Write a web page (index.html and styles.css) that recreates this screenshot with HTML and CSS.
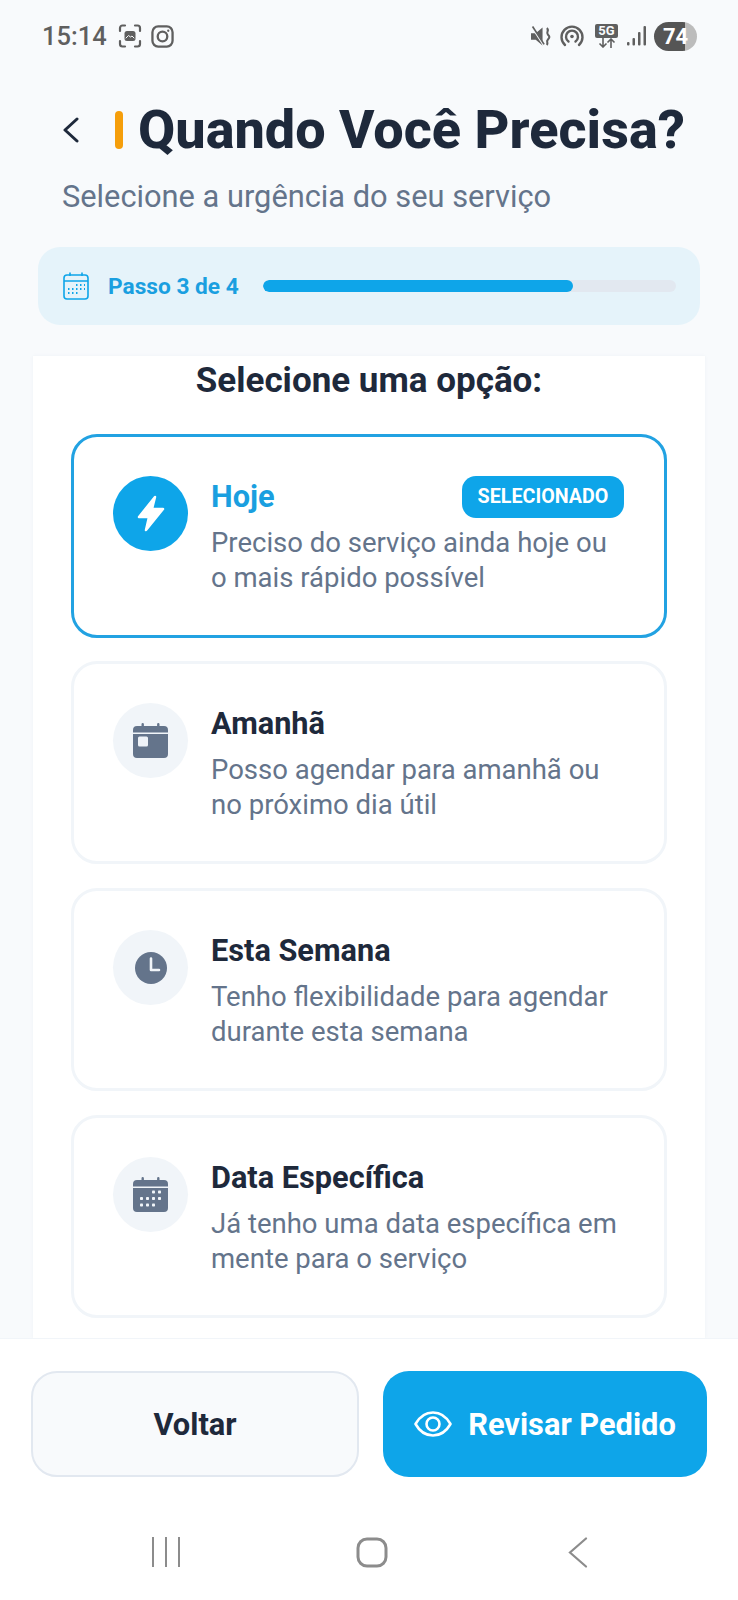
FILE: index.html
```html
<!DOCTYPE html>
<html lang="pt-BR">
<head>
<meta charset="utf-8">
<title>Quando Você Precisa?</title>
<link rel="stylesheet" href="styles.css">
</head>
<body>
<div class="screen">
  <div class="status">
    <span class="time">15:14</span>
    <svg class="st-capture" viewBox="0 0 24 24" fill="none" stroke="#5f5f5f" stroke-width="2.2" stroke-linecap="round"><path d="M2 7V4a2.5 2.5 0 0 1 2.5-2.5H7M17 1.5h2.5A2.5 2.5 0 0 1 22 4v3M22 17v3a2.500 2.500 0 0 1-2.500 2.500H17M7 22.500H4.500A2.500 2.500 0 0 1 2 20v-3"/><rect x="6.500" y="7" width="11" height="10" rx="2.500" fill="#5f5f5f" stroke="none"/><path d="M8 14l2.500-2.500 2 1.500 1.500-1 2 2" stroke="#f8fafc" stroke-width="1"/></svg>
    <svg class="st-insta" viewBox="0 0 24 24" fill="none" stroke="#5f5f5f" stroke-width="2.400"><rect x="1.500" y="1.500" width="21" height="21" rx="6"/><circle cx="12" cy="12" r="5"/><circle cx="18" cy="6" r="1.200" fill="#5f5f5f" stroke="none"/></svg>
    <span class="st-spacer"></span>
    <svg class="st-mute" viewBox="0 0 20 20"><path d="M0 7h4.500L11 1.500v17L4.500 13H0z" fill="#5f5f5f"/><path d="M1 1l11 17" stroke="#f8fafc" stroke-width="2"/><path d="M1.500 0.500l11 17" stroke="#5f5f5f" stroke-width="1.600"/><path d="M15 2c3 2-1 4 1 6s2 3 0 5 1 3-1 5" fill="none" stroke="#5f5f5f" stroke-width="2"/></svg>
    <svg class="st-hotspot" viewBox="0 0 24 24" fill="none" stroke="#5f5f5f" stroke-width="2.400" stroke-linecap="round"><path d="M5 21A10.500 10.500 0 1 1 19 21"/><path d="M8.500 17.500a6 6 0 1 1 7 0"/><circle cx="12" cy="12.500" r="1.800" fill="#5f5f5f" stroke="none"/></svg>
    <span class="st-net">
      <span class="st-5g">5G</span>
      <svg class="st-arrows" viewBox="0 0 20 10" fill="none" stroke="#5f5f5f" stroke-width="1.600"><path d="M6 0v9M2.500 5.500L6 9l3.500-3.500M14 10V1M10.500 4.500L14 1l3.500 3.500"/></svg>
    </span>
    <svg class="st-signal" viewBox="0 0 20 20" fill="#5f5f5f"><rect x="0" y="16" width="2.500" height="3.500" rx="1"/><rect x="5.500" y="12" width="2.500" height="7.500" rx="1"/><rect x="11" y="6" width="2.500" height="13.500" rx="1"/><rect x="16.500" y="0" width="2.500" height="19.500" rx="1"/></svg>
    <span class="st-batt">74</span>
  </div>

  <header class="head">
    <div class="title-row">
      <svg class="back" viewBox="0 0 17 26" fill="none" stroke="#1e293b" stroke-width="3" stroke-linecap="round" stroke-linejoin="round"><path d="M15 2L3 13l12 11"/></svg>
      <span class="accent"></span>
      <h1 class="title">Quando Você Precisa?</h1>
    </div>
    <p class="subtitle">Selecione a urgência do seu serviço</p>
  </header>

  <div class="progress">
    <svg class="prog-icon" viewBox="0 0 26 28" fill="none" stroke="#0ea5e9" stroke-width="1.600"><rect x="1" y="3" width="24" height="24" rx="3"/><path d="M1 9h24M7 0.500V4M19 0.500V4"/><path d="M13 13h1.500M17 13h1.500M21 13h1M5 17h1.500M9 17h1.500M13 17h1.500M17 17h1.500M21 17h1M5 21h1.500M9 21h1.500M13 21h1.500" stroke-width="2"/></svg>
    <span class="prog-label">Passo 3 de 4</span>
    <div class="bar"><div class="bar-fill" style="width:75%"></div></div>
  </div>

  <main class="panel">
    <h2 class="panel-title">Selecione uma opção:</h2>
    <div class="cards">
      <article class="card card-on">
        <div class="circle circle-on">
          <svg class="ic-bolt" viewBox="0 0 28 37"><path d="M18 2L2 22h10l-3 13 17-21H15z" fill="#fff" stroke="#fff" stroke-width="2.500" stroke-linejoin="round"/></svg>
        </div>
        <div class="body">
          <div class="top"><h3 class="name name-on">Hoje</h3><span class="badge">SELECIONADO</span></div>
          <p class="desc">Preciso do serviço ainda hoje ou<br>o mais rápido possível</p>
        </div>
      </article>
      <article class="card">
        <div class="circle">
          <svg class="ic" viewBox="0 0 35 35"><path d="M4 3h4.500V1.200a1.200 1.200 0 0 1 2.400 0V3h13.200V1.200a1.200 1.200 0 0 1 2.400 0V3H31a4 4 0 0 1 4 4v2.500H0V7a4 4 0 0 1 4-4zM0 11h35v20a4 4 0 0 1-4 4H4a4 4 0 0 1-4-4z" fill="#64748b"/><rect x="5" y="13.500" width="10" height="10" rx="1.500" fill="#eef2f7"/></svg>
        </div>
        <div class="body">
          <div class="top"><h3 class="name">Amanhã</h3></div>
          <p class="desc">Posso agendar para amanhã ou<br>no próximo dia útil</p>
        </div>
      </article>
      <article class="card">
        <div class="circle">
          <svg class="ic-clock" viewBox="0 0 32 32"><circle cx="16" cy="16" r="16" fill="#64748b"/><path d="M16 6.500V18h8" fill="none" stroke="#f1f5f9" stroke-width="2.600" stroke-linecap="round" stroke-linejoin="round"/></svg>
        </div>
        <div class="body">
          <div class="top"><h3 class="name">Esta Semana</h3></div>
          <p class="desc">Tenho flexibilidade para agendar<br>durante esta semana</p>
        </div>
      </article>
      <article class="card">
        <div class="circle">
          <svg class="ic" viewBox="0 0 35 35"><path d="M4 3h4.500V1.200a1.200 1.200 0 0 1 2.400 0V3h13.200V1.200a1.200 1.200 0 0 1 2.400 0V3H31a4 4 0 0 1 4 4v2.500H0V7a4 4 0 0 1 4-4zM0 11h35v20a4 4 0 0 1-4 4H4a4 4 0 0 1-4-4z" fill="#64748b"/><g fill="#f1f5f9"><rect x="19" y="13.500" width="3" height="3" rx=".8"/><rect x="25" y="13.500" width="3" height="3" rx=".8"/><rect x="7" y="20" width="3" height="3" rx=".8"/><rect x="13" y="20" width="3" height="3" rx=".8"/><rect x="19" y="20" width="3" height="3" rx=".8"/><rect x="25" y="20" width="3" height="3" rx=".8"/><rect x="7" y="26.500" width="3" height="3" rx=".8"/><rect x="13" y="26.500" width="3" height="3" rx=".8"/><rect x="19" y="26.500" width="3" height="3" rx=".8"/></g></svg>
        </div>
        <div class="body">
          <div class="top"><h3 class="name">Data Específica</h3></div>
          <p class="desc">Já tenho uma data específica em<br>mente para o serviço</p>
        </div>
      </article>
    </div>
  </main>

  <footer class="foot">
    <button class="btn btn-back">Voltar</button>
    <button class="btn btn-main">
      <svg class="ic-eye" viewBox="0 0 38 26" fill="none" stroke="#fff" stroke-width="2.600" stroke-linejoin="round"><path d="M1.500 13C6 5 12 1.500 19 1.500S32 5 36.500 13C32 21 26 24.500 19 24.500S6 21 1.500 13z"/><circle cx="19" cy="13" r="6.500"/></svg>
      Revisar Pedido
    </button>
  </footer>

  <nav class="sysnav">
    <span class="nav-cell"><svg class="nav-ic" width="30" height="30" viewBox="0 0 30 30" stroke="#8c8c8c" stroke-width="2" fill="none"><path d="M2 0v30M15 0v30M28 0v30"/></svg></span>
    <span class="nav-cell"><svg class="nav-ic" width="32" height="31" viewBox="0 0 32 31" stroke="#8c8c8c" stroke-width="3" fill="none"><rect x="2" y="2" width="28" height="27" rx="9"/></svg></span>
    <span class="nav-cell"><svg class="nav-ic" width="20" height="31" viewBox="0 0 20 31" stroke="#8c8c8c" stroke-width="2.200" fill="none" stroke-linecap="round"><path d="M18 1.500L2 15.500l16 14"/></svg></span>
  </nav>
</div>
</body>
</html>
```

FILE: styles.css
```css
* { box-sizing: border-box; margin: 0; padding: 0; }
html, body { width: 738px; height: 1600px; overflow: hidden; }
body { font-family: Roboto, "Liberation Sans", sans-serif; background: #f8fafc; color: #1e293b; }
.screen { width: 738px; height: 1600px; display: flex; flex-direction: column; }

.status { height: 72px; flex: none; display: flex; align-items: center; padding: 0 41px 0 42px; }
.time { font-size: 25.500px; font-weight: 500; color: #5f5f5f; width: 64px; margin-right: 12px; white-space: nowrap; }
.st-capture { width: 24px; height: 24px; margin-right: 9px; }
.st-insta { width: 23px; height: 23px; }
.st-spacer { flex: 1; }
.st-mute { width: 21px; height: 21px; margin-right: 8px; }
.st-hotspot { width: 24px; height: 24px; margin-right: 11px; }
.st-net { width: 23px; display: flex; flex-direction: column; align-items: center; margin-right: 9px; }
.st-5g { width: 23px; height: 14px; background: #5f5f5f; color: #f8fafc; font-size: 13px; font-weight: 700; line-height: 14px; text-align: center; border-radius: 2px; }
.st-arrows { width: 20px; height: 10px; }
.st-signal { width: 20px; height: 20px; margin-right: 7px; }
.st-batt { width: 43px; height: 29px; border-radius: 15px; background: linear-gradient(90deg, #555 0 72%, #bcbcbc 72% 100%); color: #fff; font-size: 22px; font-weight: 700; line-height: 29px; text-align: center; }

.head { flex: none; padding: 28px 0 0 62px; }
.title-row { display: flex; align-items: center; height: 60px; }
.back { width: 17px; height: 26px; margin-right: 36px; }
.accent { width: 8px; height: 38px; border-radius: 4px; background: #f59e0b; margin-right: 15px; }
.title { font-size: 54px; font-weight: 800; line-height: 60px; color: #1e293b; white-space: nowrap; }
.subtitle { margin-top: 19px; font-size: 30.800px; line-height: 36px; color: #64748b; }

.progress { flex: none; margin: 32px 38px 0 38px; height: 78px; border-radius: 22px; background: #e5f3fa; display: flex; align-items: center; padding: 0 24px 0 25px; }
.prog-icon { width: 26px; height: 28px; margin-right: 19px; }
.prog-label { font-size: 22.700px; font-weight: 700; color: #1a9fe0; width: 155px; white-space: nowrap; }
.bar { flex: 1; height: 12px; border-radius: 6px; background: #e2e8f0; overflow: hidden; }
.bar-fill { height: 100%; border-radius: 6px; background: #0ea5e9; }

.panel { flex: 1 1 0; min-height: 0; overflow: hidden; margin: 31px 33px 0; background: #fff; padding: 3px 38px 0; box-shadow: 0 0 3px rgba(148, 163, 184, .1); }
.panel-title { font-size: 35px; font-weight: 700; line-height: 44px; text-align: center; color: #1e293b; margin-bottom: 31px; }
.cards { display: flex; flex-direction: column; gap: 24px; }
.card { height: 203px; flex: none; border: 3px solid #f1f5f9; border-radius: 26px; padding: 39px 40px 0 39px; display: flex; gap: 23px; align-items: flex-start; background: #fff; }
.card-on { border-color: #22a2e2; height: 204px; margin-bottom: -1px; }
.circle { width: 75px; height: 75px; flex: none; border-radius: 50%; background: #f1f5f9; display: flex; align-items: center; justify-content: center; }
.circle-on { background: #0ea5e9; }
.ic-bolt { width: 28px; height: 37px; }
.ic { width: 35px; height: 35px; }
.ic-clock { width: 32px; height: 32px; }
.body { flex: 1; min-width: 0; }
.top { display: flex; align-items: center; justify-content: space-between; height: 42px; }
.name { font-size: 30.700px; font-weight: 700; line-height: 44px; color: #1e293b; }
.name-on { color: #1a9fe0; }
.badge { width: 162px; height: 42px; border-radius: 14px; background: #0ea5e9; color: #fff; font-size: 19.700px; font-weight: 700; line-height: 42px; text-align: center; white-space: nowrap; }
.desc { margin-top: 7px; font-size: 27.500px; line-height: 35px; color: #64748b; white-space: nowrap; }

.foot { flex: none; height: 139px; background: #fff; border-top: 1px solid #f1f5f9; padding: 32px 31px 0; display: flex; gap: 24px; align-items: flex-start; }
.btn { height: 106px; border-radius: 26px; font-family: inherit; font-size: 30.800px; font-weight: 700; display: flex; align-items: center; justify-content: center; }
.btn-back { width: 328px; background: #f8fafc; border: 2px solid #e2e8f0; color: #1e293b; }
.btn-main { width: 324px; background: #0ea5e9; border: 0; color: #fff; gap: 16px; }
.ic-eye { width: 38px; height: 26px; }

.sysnav { flex: none; height: 123px; background: #fff; display: flex; padding: 60px 0 0 63px; align-items: flex-start; }
.nav-cell { width: 206px; display: flex; justify-content: center; }
.nav-ic { display: block; }
```
